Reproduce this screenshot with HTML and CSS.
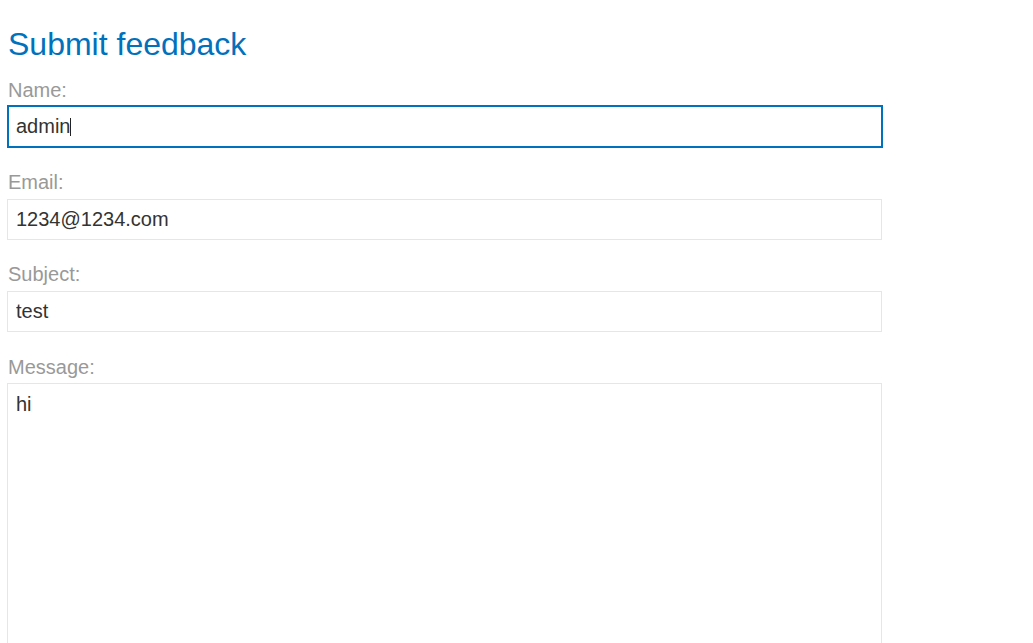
FILE: index.html
```html
<!DOCTYPE html>
<html lang="en">
<head>
<meta charset="utf-8">
<title>Submit feedback</title>
<link rel="stylesheet" href="styles.css">
</head>
<body>
<div class="page">
  <h1 class="title">Submit feedback</h1>
  <form class="form">
    <label class="label" for="name">Name:</label>
    <div class="field-wrap">
      <input class="input input-focused" id="name" type="text" value="admin">
      <span class="caret"></span>
    </div>
    <label class="label" for="email">Email:</label>
    <input class="input" id="email" type="text" value="1234@1234.com">
    <label class="label" for="subject">Subject:</label>
    <input class="input" id="subject" type="text" value="test">
    <label class="label label-message" for="message">Message:</label>
    <textarea class="textarea" id="message">hi</textarea>
  </form>
</div>
</body>
</html>
```

FILE: styles.css
```css
html, body {
  margin: 0;
  padding: 0;
  background: #fff;
}
body {
  font-family: "Liberation Sans", Arial, sans-serif;
  overflow: hidden;
}
.page {
  padding: 24px 0 0 7px;
}
.title {
  margin: 0 0 14px 1px;
  font-size: 32px;
  line-height: 40px;
  font-weight: normal;
  color: #0071bc;
}
.form {
  display: flex;
  flex-direction: column;
  width: 876px;
}
.label {
  display: block;
  font-size: 20px;
  line-height: 24px;
  color: #999;
  margin: 0 0 5px 1px;
}
.label-message {
  margin-top: 1px;
  margin-bottom: 4px;
}
.field-wrap {
  position: relative;
  margin-top: -2px;
  margin-bottom: 22px;
}
.input {
  box-sizing: border-box;
  display: block;
  width: 875px;
  height: 41px;
  margin: 0 0 22px 0;
  padding: 0 8px;
  border: 1px solid #e6e6e6;
  border-radius: 0;
  font-family: "Liberation Sans", Arial, sans-serif;
  font-size: 20px;
  color: #333;
  background: #fff;
  outline: none;
}
.input-focused {
  width: 876px;
  height: 43px;
  margin: 0;
  padding: 0 7px;
  border: 2px solid #0071bc;
}
.caret {
  position: absolute;
  left: 63px;
  top: 13px;
  width: 1px;
  height: 18px;
  background: #222;
}
.textarea {
  box-sizing: border-box;
  display: block;
  width: 875px;
  height: 300px;
  margin: 0;
  padding: 8px 8px;
  border: 1px solid #e6e6e6;
  border-radius: 0;
  font-family: "Liberation Sans", Arial, sans-serif;
  font-size: 20px;
  line-height: 24px;
  color: #333;
  background: #fff;
  resize: none;
  outline: none;
}
```
